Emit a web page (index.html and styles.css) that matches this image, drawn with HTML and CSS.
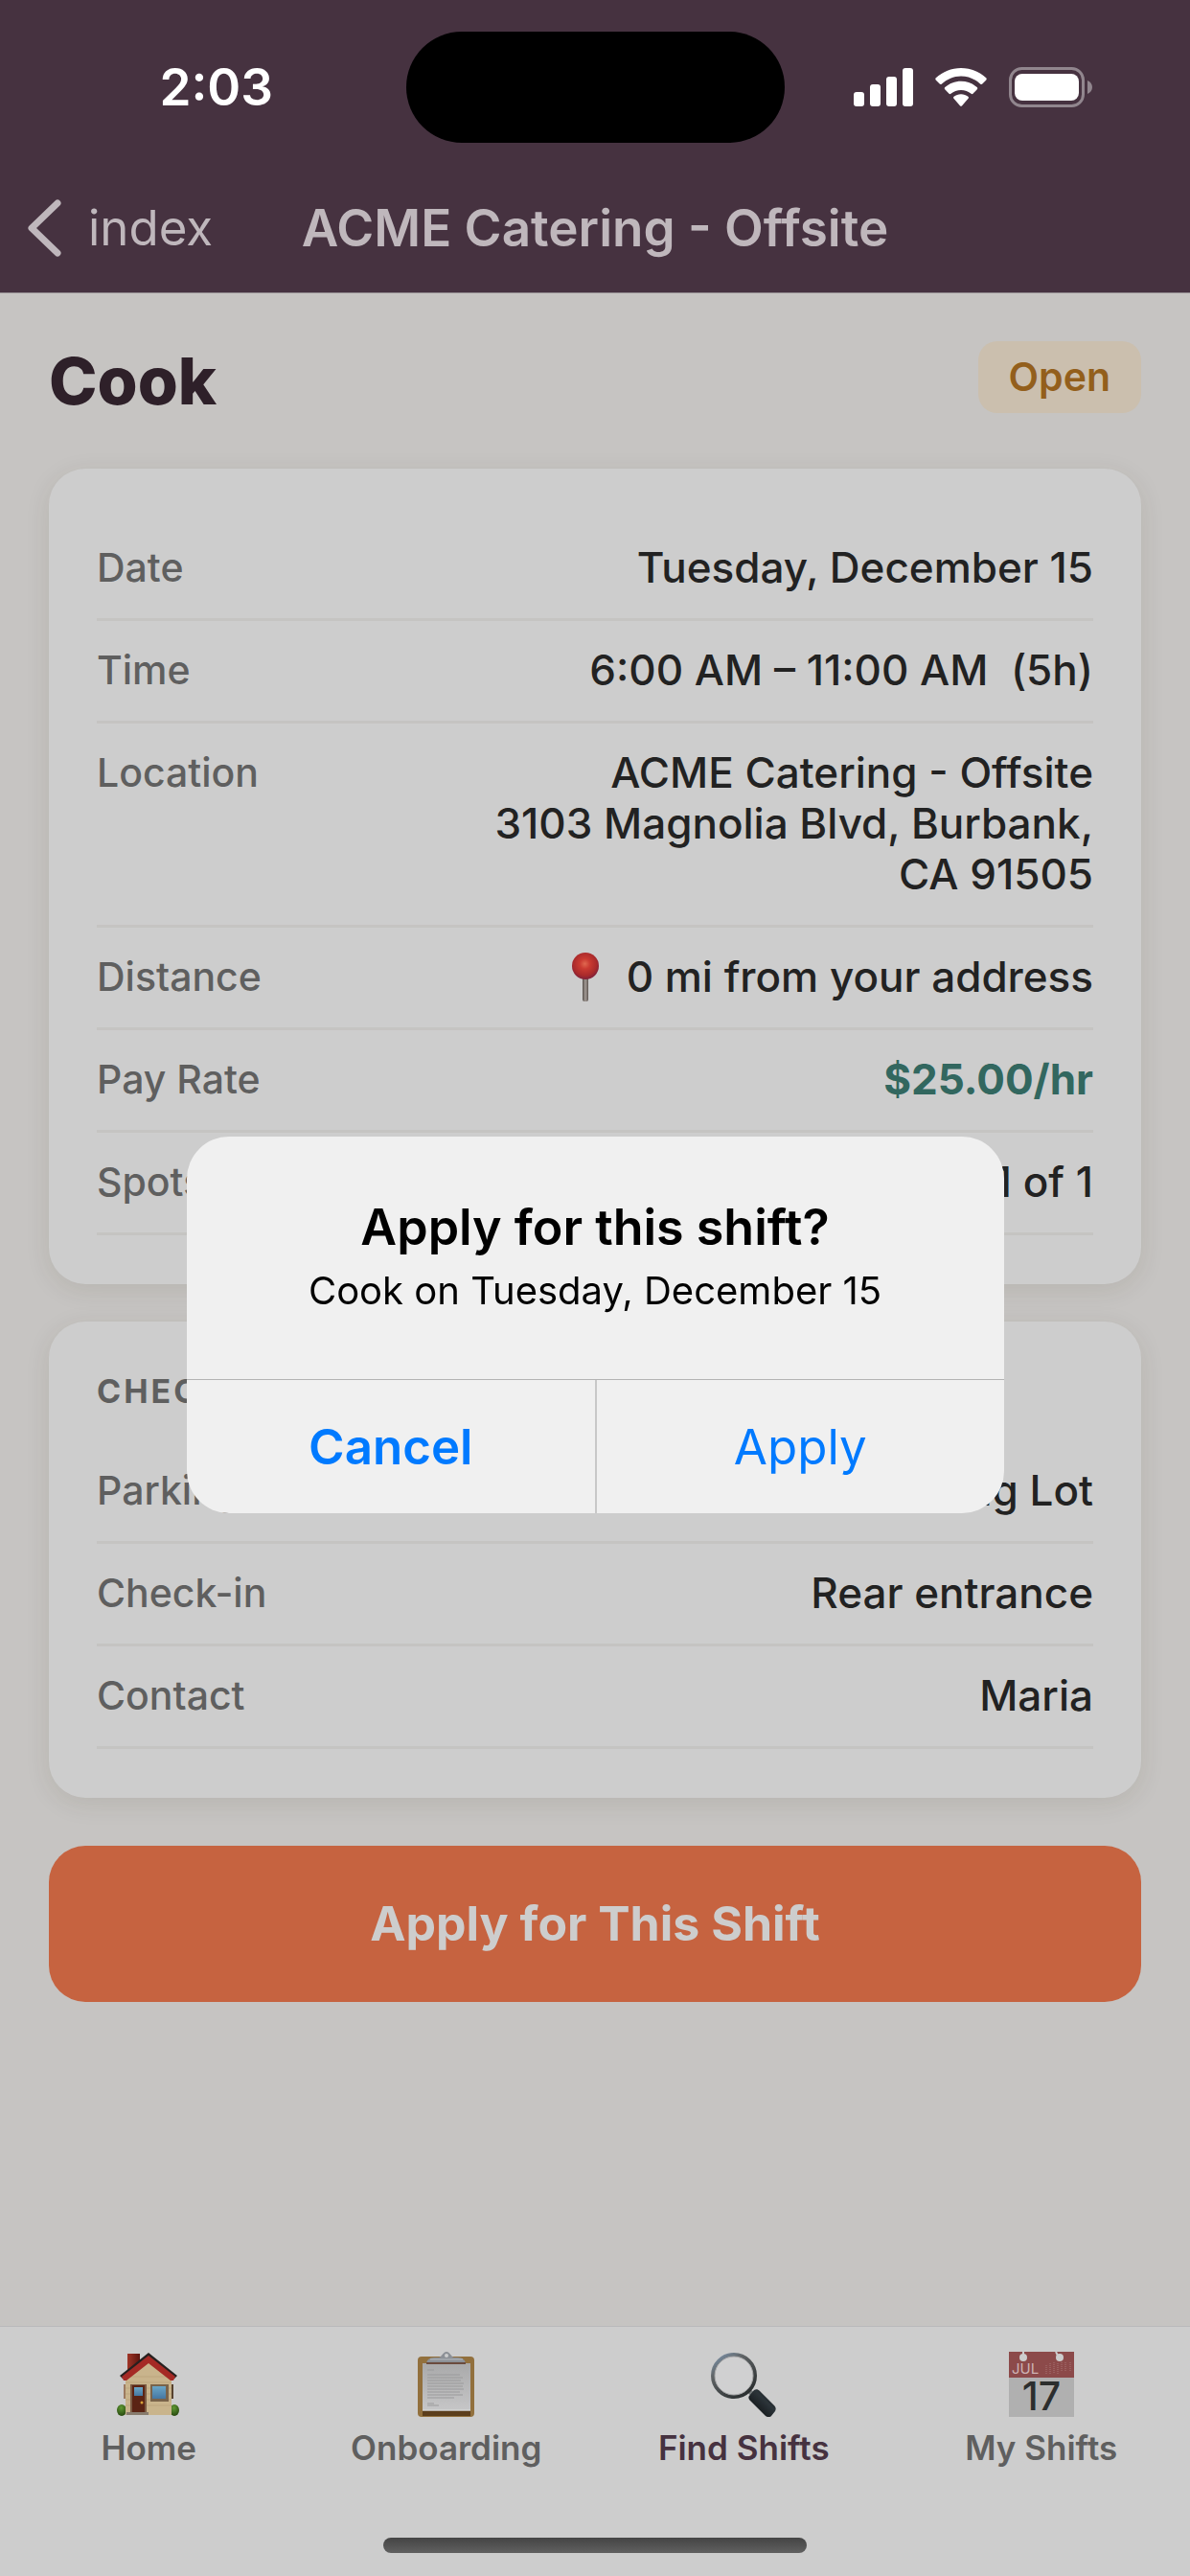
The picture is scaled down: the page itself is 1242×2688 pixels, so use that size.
FILE: index.html
```html
<!DOCTYPE html>
<html lang="en">
<head>
    <meta charset="UTF-8">
    <meta name="viewport" content="width=device-width, initial-scale=1.0">
    <title>ACME Catering - Offsite</title>
    <link rel="stylesheet" href="styles.css">
</head>
<body>

<header class="header">
    <div class="status-bar">
        <span class="clock">2:03</span>
        <div class="island"></div>
        <div class="status-icons">
            <svg class="signal" width="62" height="40" viewBox="0 0 62 40" fill="#fff">
                <rect x="0" y="25" width="11" height="15" rx="3"/>
                <rect x="17" y="17" width="11" height="23" rx="3"/>
                <rect x="34" y="9" width="11" height="31" rx="3"/>
                <rect x="51" y="0" width="11" height="40" rx="3"/>
            </svg>
            <svg class="wifi" width="54" height="40" viewBox="0 0 54 40" fill="#fff">
                <path d="M27 0c10 0 19 3.800 26.200 10.200 .700 .700 .700 1.500 .100 2.200l-4 4.200c-.600 .600-1.400 .600-2 .100C41.700 11.500 34.800 8.400 27 8.400S12.300 11.500 6.700 16.700c-.600 .500-1.400 .500-2-.100l-4-4.200c-.600-.700-.600-1.500 .100-2.200C8 3.800 17 0 27 0z"/>
                <path d="M27 13.800c6.400 0 12.200 2.400 16.700 6.300 .700 .600 .700 1.500 .100 2.100l-4.300 4.500c-.500 .500-1.300 .600-1.900 .100-2.900-2.400-6.600-3.900-10.600-3.900s-7.700 1.500-10.600 3.900c-.600 .500-1.400 .400-1.900-.100l-4.300-4.500c-.600-.600-.600-1.500 .100-2.100 4.500-3.900 10.300-6.300 16.700-6.300z"/>
                <path d="M27 27.300c2.800 0 5.300 .900 7.400 2.500 .700 .500 .700 1.400 .200 2l-6.500 7.500c-.600 .700-1.600 .700-2.200 0l-6.500-7.500c-.500-.600-.500-1.500 .200-2 2.100-1.600 4.600-2.500 7.400-2.500z"/>
            </svg>
            <svg class="battery" width="88" height="42" viewBox="0 0 88 42">
                <rect x="1.500" y="1.500" width="76" height="39" rx="12" fill="none" stroke="#91868e" stroke-width="3"/>
                <rect x="6" y="7" width="67" height="28" rx="8" fill="#fff"/>
                <path d="M82 14c3 1.200 5 4 5 7s-2 5.800-5 7z" fill="#91868e"/>
            </svg>
        </div>
    </div>
    <div class="nav-bar">
        <a class="back" href="#">
            <svg width="38" height="62" viewBox="0 0 38 62" fill="none" stroke="#bfb7bc" stroke-width="7" stroke-linecap="round" stroke-linejoin="round">
                <path d="M32 5L5 31l27 26"/>
            </svg>
            index
        </a>
        <span class="nav-title">ACME Catering - Offsite</span>
    </div>
</header>

<main class="content">
    <div class="title-row">
        <h1>Cook</h1>
        <span class="badge">Open</span>
    </div>

    <dl class="card">
        <div class="row">
            <dt>Date</dt>
            <dd>Tuesday, December 15</dd>
        </div>
        <div class="row">
            <dt>Time</dt>
            <dd>6:00 AM – 11:00 AM &nbsp;(5h)</dd>
        </div>
        <div class="row">
            <dt>Location</dt>
            <dd>ACME Catering - Offsite<br>3103 Magnolia Blvd, Burbank, CA 91505</dd>
        </div>
        <div class="row">
            <dt>Distance</dt>
            <dd class="distance">
                <svg width="30" height="52" viewBox="0 0 30 52">
                    <defs>
                        <radialGradient id="pinHead" cx="48%" cy="42%" r="55%">
                            <stop offset="0" stop-color="#e0684f"/>
                            <stop offset="0.350" stop-color="#c93a31"/>
                            <stop offset="0.800" stop-color="#a92a2b"/>
                            <stop offset="1" stop-color="#862338"/>
                        </radialGradient>
                        <linearGradient id="pinNeedle">
                            <stop offset="0" stop-color="#544d49"/>
                            <stop offset="0.500" stop-color="#a39b96"/>
                            <stop offset="1" stop-color="#5c5450"/>
                        </linearGradient>
                    </defs>
                    <rect x="12" y="25" width="6" height="26" rx="2" fill="url(#pinNeedle)"/>
                    <circle cx="15" cy="14" r="14" fill="url(#pinHead)"/>
                </svg>
                0 mi from your address
            </dd>
        </div>
        <div class="row">
            <dt>Pay Rate</dt>
            <dd class="pay">$25.00/hr</dd>
        </div>
        <div class="row">
            <dt>Spots</dt>
            <dd>1 of 1</dd>
        </div>
    </dl>

    <section class="card">
        <h2>CHECK-IN</h2>
        <dl>
            <div class="row">
                <dt>Parking</dt>
                <dd>Parking Lot</dd>
            </div>
            <div class="row">
                <dt>Check-in</dt>
                <dd>Rear entrance</dd>
            </div>
            <div class="row">
                <dt>Contact</dt>
                <dd>Maria</dd>
            </div>
        </dl>
    </section>

    <button class="apply-btn">Apply for This Shift</button>
</main>

<footer class="tab-bar">
    <nav class="tabs">
        <a class="tab" href="#">
            <svg width="68" height="68" viewBox="0 0 68 68">
                <defs>
                    <linearGradient id="chimney">
                        <stop offset="0" stop-color="#a03527"/>
                        <stop offset="1" stop-color="#5e150f"/>
                    </linearGradient>
                    <radialGradient id="bush" cx="45%" cy="30%" r="70%">
                        <stop offset="0" stop-color="#5f9a33"/>
                        <stop offset="1" stop-color="#28480f"/>
                    </radialGradient>
                    <linearGradient id="pane" x2="0" y2="1">
                        <stop offset="0" stop-color="#6ba6c6"/>
                        <stop offset="1" stop-color="#4577a2"/>
                    </linearGradient>
                </defs>
                <rect x="12" y="2" width="13" height="18" fill="url(#chimney)"/>
                <ellipse cx="6" cy="61" rx="5" ry="6" fill="url(#bush)"/>
                <ellipse cx="61" cy="61" rx="5" ry="6" fill="url(#bush)"/>
                <rect x="8" y="34" width="2" height="15" fill="#9c7a60"/>
                <rect x="58" y="34" width="2" height="15" fill="#57422f"/>
                <path d="M10 27L34 8l24 19v39H10z" fill="#c9b48c"/>
                <path d="M10 32h48M10 38h48M10 44h48M10 50h48M10 56h48M15 26h38" stroke="#bda67e" stroke-width="1"/>
                <path d="M34 1L4 25l3 3 27-20 27 20 3-3z" fill="#26201f"/>
                <path d="M34 4L6 26l2 4h3l23-18 23 18h3l2-4z" fill="#a52a25"/>
                <rect x="15" y="34" width="17" height="29" fill="#7a5a43"/>
                <rect x="17" y="35" width="13" height="28" fill="#5b2415"/>
                <rect x="19" y="37" width="9" height="9" fill="url(#pane)"/>
                <circle cx="27" cy="53" r="1.500" fill="#d9a137"/>
                <path d="M11 63h23v3H11z" fill="#877b6d"/>
                <rect x="36" y="34" width="19" height="18" fill="#79634a"/>
                <rect x="38" y="36" width="14" height="13" fill="url(#pane)"/>
            </svg>
            Home
        </a>
        <a class="tab" href="#">
            <svg width="68" height="68" viewBox="0 0 68 68">
                <defs>
                    <linearGradient id="sheet" x2="0" y2="1">
                        <stop offset="0" stop-color="#a9a9aa"/>
                        <stop offset="1" stop-color="#c6c6c7"/>
                    </linearGradient>
                </defs>
                <rect x="4" y="5" width="59" height="63" rx="4" fill="#92703d"/>
                <rect x="9" y="61" width="50" height="6" fill="#5c3e1c"/>
                <rect x="9" y="12" width="50" height="49" fill="url(#sheet)"/>
                <path d="M9 61h50" stroke="#d5d5d5" stroke-width="1.500"/>
                <path d="M14 19h7M14 24h34M14 27h37M14 30h35M14 33h38M14 36h37M14 39h38M14 42h34M14 45h37M14 48h28M14 54h7M14 56h12" stroke="#9a9a9b" stroke-width="1"/>
                <path d="M13 13c0-4 3-7 8-7h5c3 0 4-6 8-6s5 6 8 6h4c5 0 8 3 8 7z" fill="#8c9096"/>
                <path d="M17 8h34" stroke="#a8acb1" stroke-width="1.500"/>
                <rect x="13" y="11" width="41" height="2" fill="#6b4b3d"/>
                <circle cx="34" cy="4" r="2" fill="#cdcdcd"/>
            </svg>
            Onboarding
        </a>
        <a class="tab tab-active" href="#">
            <svg width="68" height="68" viewBox="0 0 68 68">
                <defs>
                    <linearGradient id="rim" x1="0" y1="0" x2="0.700" y2="1">
                        <stop offset="0" stop-color="#8098b2"/>
                        <stop offset="0.350" stop-color="#5f6365"/>
                        <stop offset="1" stop-color="#2c3031"/>
                    </linearGradient>
                    <linearGradient id="handle" x1="0" y1="1" x2="1" y2="0">
                        <stop offset="0" stop-color="#050607"/>
                        <stop offset="0.600" stop-color="#2c3439"/>
                        <stop offset="1" stop-color="#0c0f11"/>
                    </linearGradient>
                </defs>
                <path d="M40 41l5 5" stroke="#74797a" stroke-width="5"/>
                <path d="M45 40c2-1 4-1 6 1l15 15c2 2 2 4 1 6l-4 5c-2 2-5 1-6 0L41 51c-2-2-2-4-1-5z" fill="url(#handle)"/>
                <circle cx="24" cy="25" r="22" fill="#d0d0d1" stroke="url(#rim)" stroke-width="4"/>
                <circle cx="24" cy="25" r="20" fill="none" stroke="#a7a7a8" stroke-width="1"/>
            </svg>
            Find Shifts
        </a>
        <a class="tab" href="#">
            <svg width="68" height="68" viewBox="0 0 68 68">
                <rect x="0" y="0" width="68" height="27" fill="#8c4a4a"/>
                <rect x="0" y="27" width="68" height="41" fill="#b0b0b0"/>
                <path d="M15 0v6M49 0l3 6" stroke="#cdcdcd" stroke-width="2"/>
                <circle cx="15" cy="6" r="4" fill="#cdcdcd"/>
                <circle cx="53" cy="6" r="4" fill="#cdcdcd"/>
                <path d="M39 14v9M43 12v11M47 11v12M51 12v11M55 11v10M59 11v9M64 11v9" stroke="#a87474" stroke-width="1" stroke-dasharray="1 1"/>
                <text class="cal-month" x="3" y="23">JUL</text>
                <text class="cal-day" x="34" y="61">17</text>
            </svg>
            My Shifts
        </a>
    </nav>
    <div class="home-indicator"></div>
</footer>

<div class="overlay">
    <div class="alert" role="alertdialog" aria-labelledby="alertTitle" aria-describedby="alertText">
        <div class="alert-body">
            <h3 id="alertTitle">Apply for this shift?</h3>
            <p id="alertText">Cook on Tuesday, December 15</p>
        </div>
        <div class="alert-actions">
            <button class="alert-cancel">Cancel</button>
            <button class="alert-confirm">Apply</button>
        </div>
    </div>
</div>

</body>
</html>
```
FILE: styles.css
```css
* {
    box-sizing: border-box;
}
body {
    font-family: Inter, "Liberation Sans", sans-serif;
    margin: 0;
    min-height: 100vh;
    display: flex;
    flex-direction: column;
    background-color: #c6c4c2;
    color: #222;
}
h1, h2, h3, p, dl, dd {
    margin: 0;
}
a {
    color: inherit;
    text-decoration: none;
}
button {
    font-family: inherit;
    border: none;
    cursor: pointer;
}

/* Header */
.header {
    background-color: #463240;
    border-bottom: 1px solid #8a8287;
}
.status-bar {
    display: grid;
    grid-template-columns: 1fr 395px 1fr;
    align-items: center;
    justify-items: center;
    height: 170px;
    padding: 11px 28px 0;
    color: #fff;
}
.clock {
    font-size: 53px;
    line-height: 60px;
    font-weight: 600;
}
.island {
    width: 100%;
    height: 116px;
    border-radius: 58px;
    background: #000;
}
.status-icons {
    display: flex;
    align-items: center;
    gap: 23px;
}
.nav-bar {
    display: grid;
    grid-template-columns: 1fr auto 1fr;
    align-items: center;
    height: 135px;
    padding: 0 28px;
    color: #bfb7bc;
}
.back {
    display: flex;
    align-items: center;
    gap: 26px;
    font-size: 51px;
}
.nav-title {
    font-size: 53px;
    font-weight: 600;
}

/* Shift details */
.content {
    flex: 1;
    padding: 50px 51px;
}
.title-row {
    display: flex;
    justify-content: space-between;
    align-items: flex-start;
    margin-bottom: 50px;
}
h1 {
    font-size: 68px;
    line-height: 83px;
    font-weight: 800;
    color: #2e2029;
}
.badge {
    padding: 14px 32px;
    border-radius: 20px;
    background-color: #cbbfae;
    color: #935f1c;
    font-size: 41px;
    line-height: 47px;
    font-weight: 600;
}
.card {
    padding: 52px 50px 51px;
    margin-bottom: 39px;
    border-radius: 38px;
    background-color: #cdcdcd;
    box-shadow: 0 6px 26px rgba(60, 50, 20, 0.1);
}
.card h2 {
    margin-bottom: 31px;
    font-size: 34px;
    line-height: 42px;
    font-weight: 700;
    letter-spacing: 3px;
    color: #5f5f5f;
}
.row {
    display: flex;
    justify-content: space-between;
    padding: 25px 0 26px;
    border-bottom: 3px solid #c5c4c2;
    line-height: 53px;
}
dt {
    font-size: 41px;
    font-weight: 500;
    color: #5f5f5f;
}
dd {
    max-width: 64%;
    font-size: 44px;
    font-weight: 500;
    text-align: right;
}
.distance {
    display: flex;
    align-items: center;
    gap: 28px;
}
.pay {
    font-weight: 700;
    color: #32675f;
}
.apply-btn {
    width: 100%;
    margin-top: 11px;
    padding: 50px;
    border-radius: 38px;
    background-color: #c66340;
    color: #cdcdcd;
    font-size: 50px;
    line-height: 63px;
    font-weight: 700;
}

/* Tab bar */
.tab-bar {
    padding: 26px 0 24px;
    border-top: 1px solid #b9b9bb;
    background-color: #cdcdcd;
}
.tabs {
    display: grid;
    grid-template-columns: repeat(4, 1fr);
}
.tab {
    display: flex;
    flex-direction: column;
    align-items: center;
    gap: 11px;
    font-size: 35px;
    line-height: 42px;
    font-weight: 600;
    color: #5f5f5f;
}
.tab-active {
    color: #463240;
}
.cal-month {
    font-size: 15px;
    font-weight: 400;
    fill: #cdb4b4;
}
.cal-day {
    font-size: 41px;
    font-weight: 500;
    text-anchor: middle;
    fill: #2c2e2e;
}
.home-indicator {
    width: 442px;
    height: 16px;
    margin: 73px auto 0;
    border-radius: 8px;
    background: linear-gradient(#444, #606060);
}

/* Alert */
.overlay {
    position: fixed;
    inset: 0;
    display: flex;
    align-items: center;
    justify-content: center;
    padding-top: 76px;
}
.alert {
    width: 853px;
    max-width: 90%;
    border-radius: 44px;
    overflow: hidden;
    background-color: #f0f0f0;
    color: #000;
    text-align: center;
}
.alert-body {
    padding: 63px 50px 66px;
}
.alert h3 {
    margin-bottom: 8px;
    font-size: 52px;
    line-height: 64px;
    font-weight: 600;
}
.alert p {
    font-size: 40px;
    line-height: 52px;
}
.alert-actions {
    display: grid;
    grid-template-columns: 1fr 1fr;
    border-top: 1px solid #b4b4b4;
}
.alert button {
    padding: 38px 0;
    background: none;
    color: #007aff;
    font-size: 51px;
    line-height: 63px;
}
.alert .alert-cancel {
    font-weight: 600;
}
.alert .alert-confirm {
    border-left: 2px solid #c8c8c8;
}
```
